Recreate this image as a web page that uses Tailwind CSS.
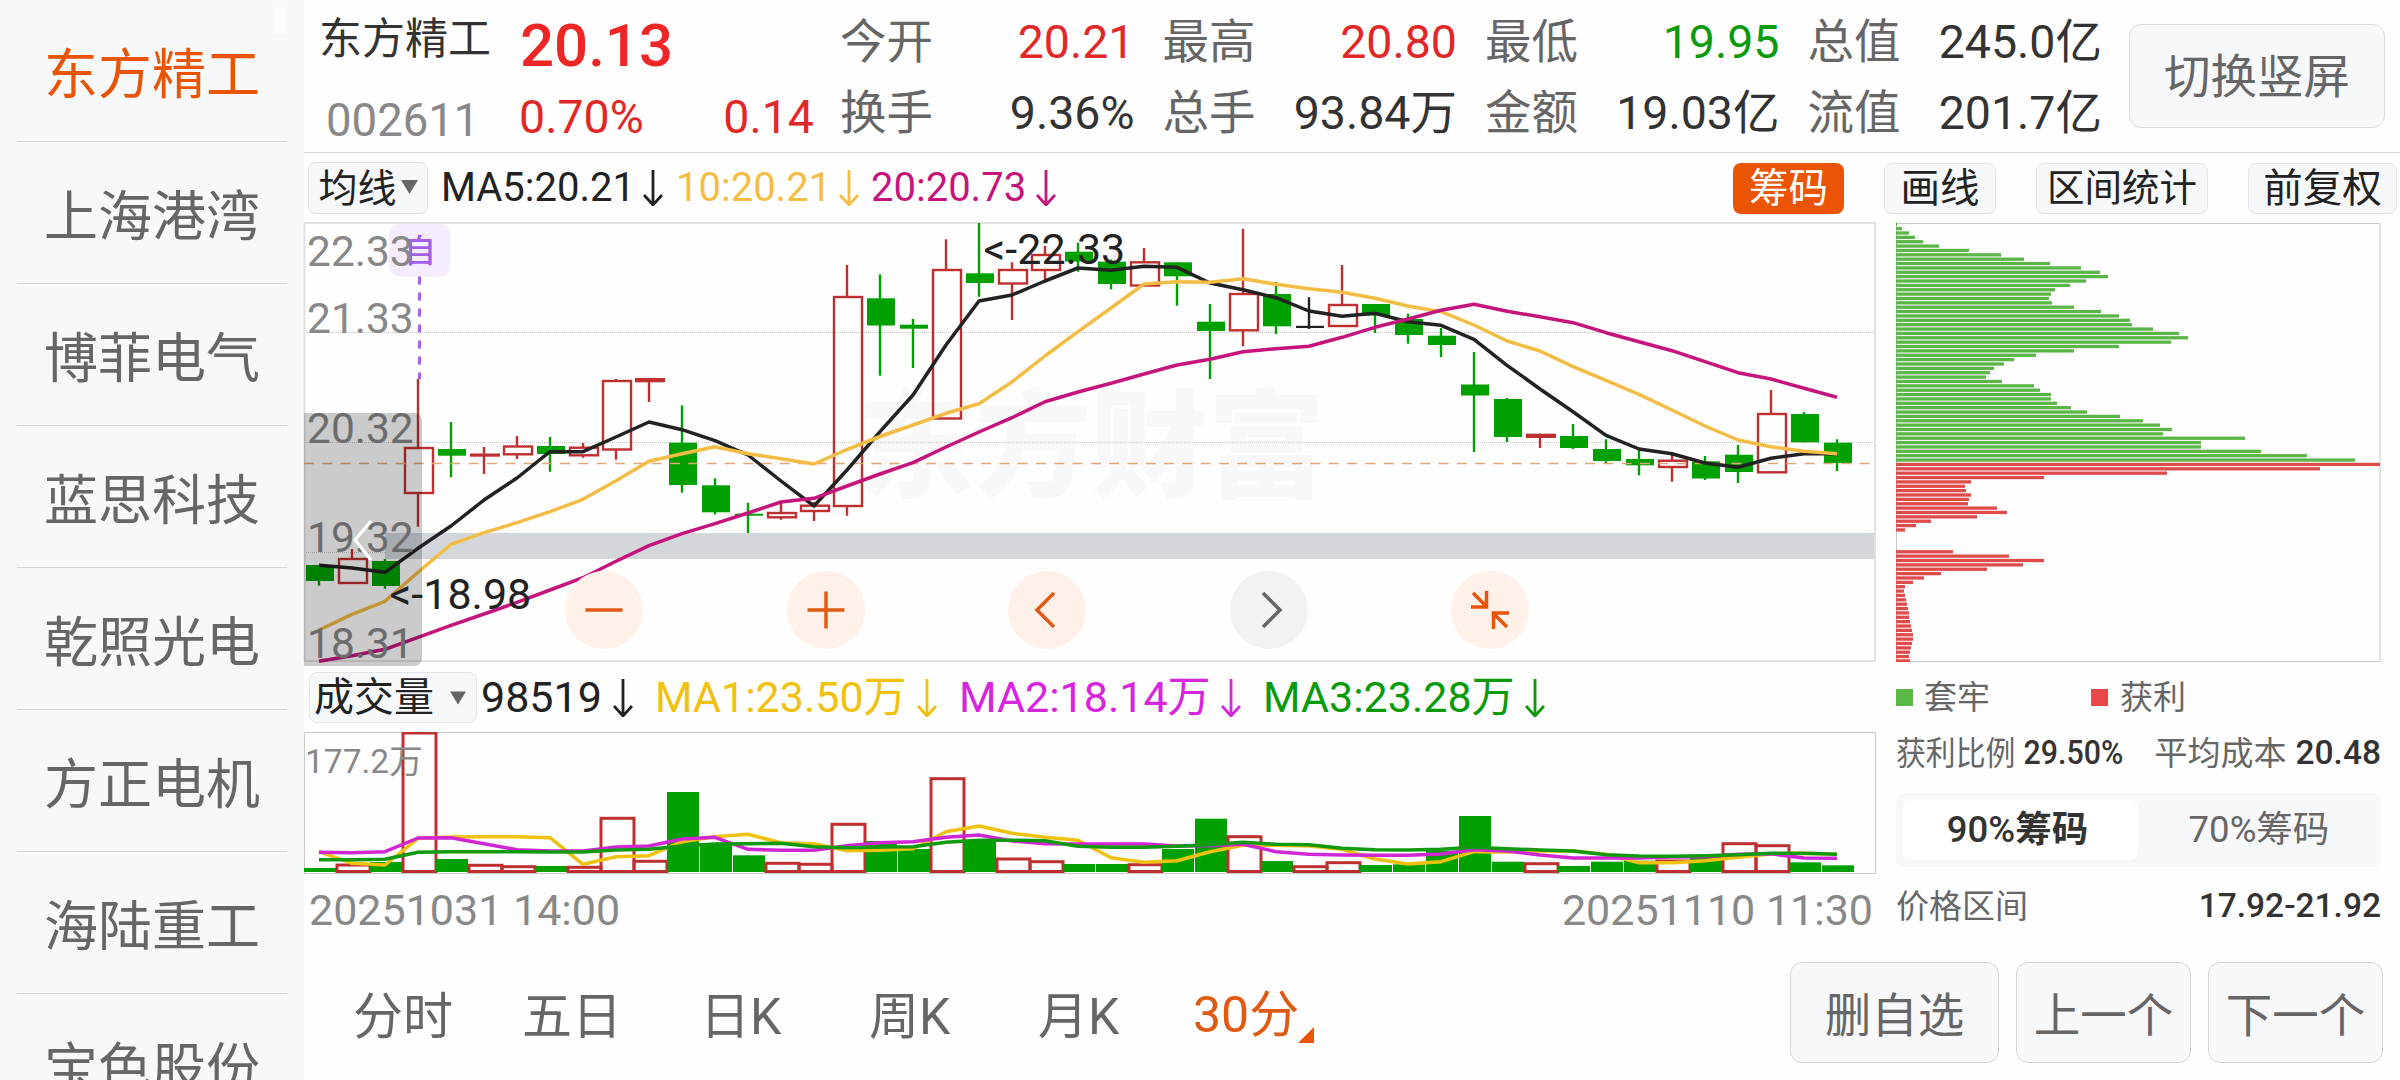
<!DOCTYPE html>
<html lang="zh-CN">
  <head>
    <meta charset="UTF-8" />
    <meta name="viewport" content="width=device-width, initial-scale=1.0" />
    <title>东方精工 002611</title>
    <script src="https://cdn.jsdelivr.net/npm/@tailwindcss/browser@4"></script>
  </head>
  <body
    class="w-[2400px] h-[1080px] overflow-hidden flex bg-[#fefefe] text-[#333] leading-none whitespace-nowrap font-['Roboto','Noto_Sans_CJK_SC',sans-serif]"
  >
    <!-- Watch list -->
    <aside class="relative w-[304px] h-full shrink-0 overflow-hidden bg-[#f7f8fa] px-[17px] text-[54px] text-[#666]">
      <div class="h-[142px] pt-2.5 flex items-center justify-center border-b border-[#d3d5d8] text-[#e95504]">东方精工</div>
      <div class="h-[142px] pt-2.5 flex items-center justify-center border-b border-[#d3d5d8]">上海港湾</div>
      <div class="h-[142px] pt-2.5 flex items-center justify-center border-b border-[#d3d5d8]">博菲电气</div>
      <div class="h-[142px] pt-2.5 flex items-center justify-center border-b border-[#d3d5d8]">蓝思科技</div>
      <div class="h-[142px] pt-2.5 flex items-center justify-center border-b border-[#d3d5d8]">乾照光电</div>
      <div class="h-[142px] pt-2.5 flex items-center justify-center border-b border-[#d3d5d8]">方正电机</div>
      <div class="h-[142px] pt-2.5 flex items-center justify-center border-b border-[#d3d5d8]">海陆重工</div>
      <div class="h-[142px] pt-2.5 flex items-center justify-center">宝色股份</div>
      <div class="absolute right-[17px] top-[5px] w-[14px] h-[29px] bg-[#fbfbfc]"></div>
    </aside>

    <main class="flex-1 flex flex-col">
      <!-- Quote header -->
      <header class="h-[153px] shrink-0 flex border-b border-[#d6d6d6]">
        <div class="w-[201px] pl-[15px] flex flex-col">
          <div class="h-[78px] flex items-center text-[43px] text-[#333]">东方精工</div>
          <div class="h-[74px] pt-[12px] pl-[7px] flex items-center text-[45.5px] text-[#888]">002611</div>
        </div>
        <div class="w-[309px] pl-[14px] flex flex-col text-[#ee2626]">
          <div class="h-[82px] pt-[10px] pl-px flex items-center text-[60px] font-medium">20.13</div>
          <div class="h-[70px] flex items-center justify-between text-[46.5px] text-[#e02828]">
            <span>0.70%</span><span>0.14</span>
          </div>
        </div>
        <div class="ml-[26px] pt-[7px] grid grid-cols-4 grid-rows-[71px_71px] gap-x-[28px] w-[1262px] text-[46.5px]">
          <div class="flex items-center justify-between"><span class="text-[#666]">今开</span><span class="text-[#e02828]">20.21</span></div>
          <div class="flex items-center justify-between"><span class="text-[#666]">最高</span><span class="text-[#e02828]">20.80</span></div>
          <div class="flex items-center justify-between"><span class="text-[#666]">最低</span><span class="text-[#0a9a0a]">19.95</span></div>
          <div class="flex items-center justify-between"><span class="text-[#666]">总值</span><span>245.0亿</span></div>
          <div class="flex items-center justify-between"><span class="text-[#666]">换手</span><span>9.36%</span></div>
          <div class="flex items-center justify-between"><span class="text-[#666]">总手</span><span>93.84万</span></div>
          <div class="flex items-center justify-between"><span class="text-[#666]">金额</span><span>19.03亿</span></div>
          <div class="flex items-center justify-between"><span class="text-[#666]">流值</span><span>201.7亿</span></div>
        </div>
        <button class="ml-[27px] mt-6 pt-[3px] w-[256px] h-[104px] rounded-xl border border-[#d8dade] bg-[#f7f8fa] text-[46.5px] text-[#666]">切换竖屏</button>
      </header>

      <!-- Indicator bar -->
      <div class="h-[69px] shrink-0 flex items-center pl-1 pr-[3px] text-[40px] text-[#222]">
        <button class="w-[120px] h-[52px] pt-[3px] flex items-center justify-center gap-1 rounded-lg border border-[#e1e4e8] bg-[#f7f8fa] text-[39px]">
          均线
          <svg class="w-[17px] h-[14px] mb-1" viewBox="0 0 17 14"><path d="M0 0h17l-8.500 14z" fill="#666" /></svg>
        </button>
        <div class="ml-[13px] pt-px w-[222px] flex items-center justify-between text-[#222]">
          MA5:20.21
          <svg class="shrink-0 w-5 h-9" viewBox="0 0 20 36" fill="none" stroke="currentColor" stroke-width="2.8"><path d="M10 0v34M1 25l9 10l9-10" /></svg>
        </div>
        <div class="ml-[13px] pt-px w-[183px] flex items-center justify-between text-[#f5bd45]">
          10:20.21
          <svg class="shrink-0 w-5 h-9" viewBox="0 0 20 36" fill="none" stroke="currentColor" stroke-width="2.8"><path d="M10 0v34M1 25l9 10l9-10" /></svg>
        </div>
        <div class="ml-3 pt-px w-[185px] flex items-center justify-between text-[#c5157c]">
          20:20.73
          <svg class="shrink-0 w-5 h-9" viewBox="0 0 20 36" fill="none" stroke="currentColor" stroke-width="2.8"><path d="M10 0v34M1 25l9 10l9-10" /></svg>
        </div>
        <div class="ml-auto pt-px flex gap-10 text-[39.5px]">
          <button class="w-[111px] h-[51px] pt-[2px] rounded-lg bg-[#e95504] text-white">筹码</button>
          <button class="w-[112px] h-[51px] pt-[2px] rounded-lg border border-[#e1e4e8] bg-[#f7f8fa]">画线</button>
          <button class="w-[172px] h-[51px] pt-[2px] rounded-lg border border-[#e1e4e8] bg-[#f7f8fa] text-[37.5px]">区间统计</button>
          <button class="w-[149px] h-[51px] pt-[2px] rounded-lg border border-[#e1e4e8] bg-[#f7f8fa]">前复权</button>
        </div>
      </div>

      <div class="flex h-[717px] shrink-0">
        <section class="w-[1572px] flex flex-col">
          <!-- Candles -->
          <div class="relative h-[440px]">
            <svg id="kline" class="block w-[1572px] h-[440px] overflow-visible" viewBox="304 222 1572 440">
              <text x="857" y="488" font-size="117" font-weight="900" fill="#f8f8f8">东方财富</text>
              <path d="M304 332.500H1875M304 442.500H1875M304 552.500H1875" stroke="#c8c8c8" stroke-dasharray="1 1" />
              <rect x="385" y="533" width="1490" height="26" fill="#d3d7dc" />
              <path d="M304 223H1875V661H304.500V223" fill="none" stroke="#e2e2e2" stroke-width="2" />
              <rect x="389" y="224" width="61.500" height="52.500" rx="11" fill="#f5edff" />
              <text x="404" y="262" font-size="32" font-weight="500" fill="#a35fe6">自</text>
              <path d="M419.500 276.500V379" stroke="#a35fe6" stroke-width="3" stroke-dasharray="8 8" />
              <g id="candles"></g>
              <path d="M304 463.500H1876" stroke="#dfa878" stroke-width="1.500" stroke-dasharray="10 8.3" />
              <g id="averages" fill="none" stroke-width="3.500" stroke-linejoin="round"></g>
              <g font-size="42.500" fill="#888">
                <text x="307" y="266">22.33</text>
                <text x="307" y="332.500">21.33</text>
                <text x="307" y="442.500">20.32</text>
                <text x="307" y="552">19.32</text>
                <text x="307" y="657.500">18.31</text>
              </g>
              <path d="M304 413h110a8 8 0 0 1 8 8v237a8 8 0 0 1-8 8H304z" fill="#000" fill-opacity=".2" />
              <path d="M371 521L355 540L371 560" fill="none" stroke="#fff" stroke-width="3" />
              <g font-size="43" fill="#222">
                <text x="983.500" y="264">&lt;-22.33</text>
                <text x="389.500" y="608.500">&lt;-18.98</text>
              </g>
            </svg>
            <div class="absolute left-[261px] top-[349px] flex gap-[143.5px]">
              <button class="size-[78px] rounded-full bg-[#fff1ea] text-[#e05a14]">
                <svg viewBox="-39 -39 78 78" fill="none" stroke="currentColor" stroke-width="3.500"><path d="M-18.500 0h37" /></svg>
              </button>
              <button class="size-[78px] rounded-full bg-[#fff1ea] text-[#e05a14]">
                <svg viewBox="-39 -39 78 78" fill="none" stroke="currentColor" stroke-width="3.500"><path d="M-18.500 0h37M0-18.500v37" /></svg>
              </button>
              <button class="size-[78px] rounded-full bg-[#fff1ea] text-[#e05a14]">
                <svg viewBox="-39 -39 78 78" fill="none" stroke="currentColor" stroke-width="3.500"><path d="M7-17L-10 0L7 17" /></svg>
              </button>
              <button class="size-[78px] rounded-full bg-[#f2f2f2] text-[#666]">
                <svg viewBox="-39 -39 78 78" fill="none" stroke="currentColor" stroke-width="3.500"><path d="M-6-17L11 0L-6 17" /></svg>
              </button>
              <button class="size-[78px] rounded-full bg-[#fff1ea] text-[#e95504]">
                <svg viewBox="-39 -39 78 78" fill="none" stroke="currentColor" stroke-width="3.500"><path d="M-17-17L-3.500-3.500M-3.500-19V-3H-19M17 17L3.500 3.500M3.500 19V3H19" /></svg>
              </button>
            </div>
          </div>

          <!-- Volume bar -->
          <div class="h-[70px] flex items-center pl-[5px] text-[43px] text-[#222]">
            <button class="w-[168px] h-[51px] pt-[2px] flex items-center pl-1 rounded-lg border border-[#e1e4e8] bg-[#f7f8fa] text-[40px]">
              成交量
              <svg class="ml-4 w-4 h-[14px]" viewBox="0 0 17 14"><path d="M0 0h17l-8.500 14z" fill="#666" /></svg>
            </button>
            <div class="ml-1 pt-px w-[152px] flex items-center justify-between">
              98519
              <svg class="shrink-0 w-5 h-[38px]" viewBox="0 0 20 38" fill="none" stroke="currentColor" stroke-width="2.8"><path d="M10 0v36M1 27l9 10l9-10" /></svg>
            </div>
            <div class="ml-[22px] pt-px w-[282px] flex items-center justify-between text-[#f0c20f]">
              MA1:23.50万
              <svg class="shrink-0 w-5 h-[38px]" viewBox="0 0 20 38" fill="none" stroke="currentColor" stroke-width="2.8"><path d="M10 0v36M1 27l9 10l9-10" /></svg>
            </div>
            <div class="ml-[22px] pt-px w-[282px] flex items-center justify-between text-[#d625dc]">
              MA2:18.14万
              <svg class="shrink-0 w-5 h-[38px]" viewBox="0 0 20 38" fill="none" stroke="currentColor" stroke-width="2.8"><path d="M10 0v36M1 27l9 10l9-10" /></svg>
            </div>
            <div class="ml-[22px] pt-px w-[282px] flex items-center justify-between text-[#0a9a0a]">
              MA3:23.28万
              <svg class="shrink-0 w-5 h-[38px]" viewBox="0 0 20 38" fill="none" stroke="currentColor" stroke-width="2.8"><path d="M10 0v36M1 27l9 10l9-10" /></svg>
            </div>
          </div>

          <svg class="block w-[1572px] h-[142px]" viewBox="304 732 1572 142">
            <rect x="304.500" y="732.500" width="1571" height="141" fill="none" stroke="#c9c9c9" />
            <g id="volumes"></g>
            <g id="volumeAverages" fill="none" stroke-width="3.500" stroke-linejoin="round"></g>
            <text x="305" y="773" font-size="33.500" fill="#888">177.2万</text>
          </svg>

          <div class="h-[65px] pt-[8px] pl-[5px] pr-[3px] flex items-center justify-between text-[43px] text-[#888]">
            <span>20251031 14:00</span><span>20251110 11:30</span>
          </div>
        </section>

        <!-- Chip distribution -->
        <section class="ml-5 w-[485px] text-[33px] text-[#666]">
          <svg id="chips" class="block w-[485px] h-[440px]" viewBox="1896 222 485 440">
            <rect x="1896.500" y="223.500" width="483.500" height="438" fill="none" stroke="#c9c9c9" />
          </svg>
          <div class="h-[70px] flex items-center">
            <i class="size-[17px] bg-[#58b944]"></i><span class="ml-[11px] w-[167px]">套牢</span>
            <i class="size-[17px] bg-[#e84848]"></i><span class="ml-[12px]">获利</span>
          </div>
          <div class="h-[42px] flex items-center justify-between">
            <div class="w-[226px] flex items-center gap-[9px] scale-x-[.905] origin-left">
              <span>获利比例</span><span class="text-[33.5px] font-medium text-[#333]">29.50%</span>
            </div>
            <div class="flex items-center gap-[9px]"><span>平均成本</span><span class="text-[33.5px] font-medium text-[#333]">20.48</span></div>
          </div>
          <div class="mt-[19px] h-[74px] p-[7px] flex rounded-lg bg-[#f7f8fa] text-[36.5px]">
            <div class="w-[235px] pr-1.5 flex items-center justify-center rounded-lg bg-white font-medium text-[#333]">90%<b>筹码</b></div>
            <div class="flex-1 pl-1.5 flex items-center justify-center">70%筹码</div>
          </div>
          <div class="h-[78px] flex items-center justify-between">
            <span>价格区间</span><span class="text-[33.5px] font-medium text-[#333]">17.92-21.92</span>
          </div>
        </section>
      </div>

      <!-- Periods -->
      <footer class="flex-1 flex pt-[23px] pr-[17px] text-[50px] text-[#666]">
        <nav class="pl-[49px] pt-[7px] h-[102px] flex items-center">
          <span class="w-[169px]">分时</span>
          <span class="w-[178px]">五日</span>
          <span class="w-[169px]">日K</span>
          <span class="w-[169px]">周K</span>
          <span class="w-[155px]">月K</span>
          <span class="flex text-[#e05a14]">
            30分
            <svg class="mt-[37px] -ml-px w-4 h-4" viewBox="0 0 16 16"><path d="M16 0V16H0z" fill="#e95504" /></svg>
          </span>
        </nav>
        <div class="ml-auto flex gap-[17px] text-[46.5px]">
          <button class="w-[209px] h-[101px] pt-[7px] rounded-xl border border-[#d3d7dd] bg-[#f7f8fa]">删自选</button>
          <button class="w-[175px] h-[101px] pt-[7px] rounded-xl border border-[#d3d7dd] bg-[#f7f8fa]">上一个</button>
          <button class="w-[175px] h-[101px] pt-[7px] rounded-xl border border-[#d3d7dd] bg-[#f7f8fa]">下一个</button>
        </div>
      </footer>
    </main>

    <script>
      const NS = "http://www.w3.org/2000/svg";
      const RED = "#be3030";
      const GREEN = "#00a000";
      const STEP = 33;
      const FIRST = 319;

      function add(parent, tag, attrs) {
        const el = document.createElementNS(NS, tag);
        for (const key in attrs) el.setAttribute(key, attrs[key]);
        parent.appendChild(el);
      }

      // [kind, high, top, bottom, low], g = down, r = up, s = solid up, b = flat
      const candles = [
        ["g", 565, 565, 581, 585.7], ["r", 549, 559, 583, 583], ["g", 559, 561, 586, 588.7],
        ["r", 379, 448, 493, 526.7], ["g", 422, 449, 455.7, 477.3], ["s", 447, 453.5, 456.7, 474],
        ["r", 436, 446.5, 454.3, 459], ["g", 437, 446, 454, 471.7], ["r", 443, 447.7, 455.3, 457.7],
        ["r", 379, 381, 449.5, 459.7], ["s", 378, 378, 382.3, 402], ["g", 405.3, 442.7, 485, 492.7],
        ["g", 478.3, 485.3, 512.3, 514.5], ["g", 502.7, 513.7, 515.7, 533], ["r", 502.7, 513, 517.3, 519.7],
        ["r", 502, 505.7, 511, 521], ["r", 265, 297, 506, 515.7], ["g", 274.3, 298.3, 325.5, 375.7],
        ["g", 319, 324.7, 328.7, 368], ["r", 239.3, 270, 418.5, 418], ["g", 223, 273.3, 283, 296.7],
        ["r", 262.3, 270, 283.5, 320], ["r", 246, 255, 270, 280.7], ["g", 242.7, 251.7, 261.5, 271.7],
        ["g", 259.5, 261.7, 284, 289.3], ["r", 248, 262.3, 285.5, 285], ["g", 262.3, 262.3, 276.3, 305.7],
        ["g", 304, 321.7, 331, 379], ["r", 228.7, 294, 330.3, 346.3], ["g", 282, 294, 326.3, 334],
        ["b", 297.3, 325.8, 328, 329], ["r", 265, 305, 326, 326], ["g", 304, 304, 315.5, 333],
        ["g", 313.7, 319, 335, 343.7], ["g", 328, 335.7, 345, 357], ["g", 352, 384.5, 395.5, 452],
        ["g", 398, 399, 437, 442], ["s", 433.7, 433.7, 438, 448], ["g", 424, 436, 448, 449],
        ["g", 439.3, 449, 461, 463], ["g", 449, 459, 465.3, 475.3], ["r", 452.7, 460.7, 467, 481.7],
        ["g", 456, 461.3, 478.5, 480], ["g", 445, 454.7, 472, 483], ["r", 390, 414, 472.3, 472],
        ["g", 412, 414, 442.3, 442.3], ["g", 439.3, 442.7, 463, 471],
      ];
      const candleLayer = document.getElementById("candles");
      candles.forEach(([kind, high, top, bottom, low], i) => {
        const x = FIRST + i * STEP;
        const color = kind === "g" ? GREEN : kind === "b" ? "#222" : RED;
        if (kind === "r") {
          add(candleLayer, "path", {
            d: `M${x} ${high}V${top}M${x} ${bottom}V${Math.max(low, bottom)}`,
            stroke: color, "stroke-width": 2.4,
          });
          add(candleLayer, "rect", {
            x: x - 13, y: top, width: 28, height: bottom - top,
            fill: "none", stroke: color, "stroke-width": 2.4,
          });
        } else {
          add(candleLayer, "path", { d: `M${x} ${high}V${low}`, stroke: color, "stroke-width": 2.4 });
          const pad = kind === "s" ? 1 : 0;
          add(candleLayer, "rect", {
            x: x - 13 - pad, y: top, width: 28 + pad * 2, height: bottom - top, fill: color,
          });
        }
      });

      function line(layer, color, ys) {
        const points = ys.map((y, i) => `${FIRST + i * STEP},${y}`).join(" ");
        add(layer, "polyline", { points, stroke: color });
      }

      const averages = document.getElementById("averages");
      line(averages, "#222", [
        565.3, 568, 572.3, 548.3, 526, 500, 478, 451.7, 451.7, 437, 422, 429.7, 440.7, 455, 481, 506,
        470, 431.7, 395, 345, 301, 295, 281, 268, 270.3, 266.3, 267.3, 283, 289.7, 297.7, 311, 316.3,
        313.3, 321.7, 325.3, 339.3, 365.3, 389, 411.7, 435.3, 449, 453.7, 463, 467.3, 458.3, 453.7, 453.7,
      ]);
      line(averages, "#f3bc44", [
        630, 614.3, 601.3, 572.3, 544.3, 532.7, 522.7, 511.7, 499.3, 480.7, 461.3, 453.7, 446.7, 453.7,
        458.7, 464, 449.5, 436.5, 425, 413.3, 403.7, 382, 356, 331.7, 308, 284, 281.7, 282.3, 278.7,
        284.3, 288.7, 292.3, 298.3, 306, 311.7, 325, 341, 351, 366.7, 380.3, 394.3, 410, 426, 440,
        446.7, 451.3, 453.7,
      ]);
      line(averages, "#c5157c", [
        661.3, 655.7, 649.3, 637.3, 625.3, 614, 602.3, 590, 577.7, 561.3, 545.7, 533.7, 523.7, 513, 502,
        498.3, 486, 474, 462.7, 447, 432, 417.7, 401.7, 392, 383.3, 374, 365, 359.3, 351.7, 348.7,
        346.3, 337.3, 327.3, 319, 310.3, 304.3, 311.3, 316.7, 322.7, 332.7, 341.7, 350.7, 361.7, 372.7,
        379, 388.3, 397.3,
      ]);

      const volumes = [
        ["g", 868], ["r", 865], ["g", 862], ["r", 733], ["g", 859], ["r", 865.3], ["r", 866.7], ["g", 866],
        ["r", 867.3], ["r", 818.3], ["r", 861.3], ["g", 792], ["g", 844.3], ["g", 855.3], ["r", 863.3],
        ["r", 864.3], ["r", 824.3], ["g", 841], ["g", 849], ["r", 778.7], ["g", 840.3], ["r", 859],
        ["r", 861.7], ["g", 864], ["g", 864], ["r", 864.7], ["g", 849], ["g", 818.7], ["r", 836.7],
        ["g", 861], ["r", 866.7], ["r", 862.7], ["g", 865], ["g", 864.3], ["g", 850.7], ["g", 816],
        ["g", 861.7], ["r", 863.7], ["g", 866], ["g", 861.7], ["g", 860.7], ["r", 861], ["g", 856.7],
        ["r", 843.7], ["r", 845.7], ["g", 862.3], ["g", 865.3],
      ];
      const volumeLayer = document.getElementById("volumes");
      volumes.forEach(([kind, top], i) => {
        const x = FIRST + i * STEP - 15;
        add(volumeLayer, "rect", kind === "g"
          ? { x, y: top, width: 32, height: 872 - top, fill: GREEN }
          : { x, y: top, width: 33, height: 871.5 - top, fill: "none", stroke: RED, "stroke-width": 3 });
      });

      const volumeAverages = document.getElementById("volumeAverages");
      line(volumeAverages, "#f0c20f", [
        851.7, 863.3, 865, 838.3, 837, 836.7, 836.7, 837.7, 864.3, 856.7, 855.7, 841.7, 836.7, 834.3,
        842.7, 843.7, 850.7, 850.3, 848.7, 831.7, 826, 833.3, 837.3, 840.3, 857.7, 862.3, 860.7, 851.7,
        845.3, 845.3, 846, 849.3, 859, 864, 861.7, 851.7, 852, 850.7, 851, 854.3, 862.7, 862.7, 860.7,
        857.3, 854, 853.3, 854.3,
      ]);
      line(volumeAverages, "#d026d4", [
        852.3, 852.7, 851.7, 838, 837.7, 843.7, 849.7, 851, 851, 847, 846, 839, 837.3, 849.3, 850.3,
        850.3, 845.7, 842.7, 841.7, 837.3, 835, 841, 843.7, 844, 844, 844, 846, 845.7, 844.3, 851.7,
        854.3, 855, 855.3, 855.3, 854, 849.7, 851, 855, 858, 858, 858, 857, 856.7, 854.3, 853.7, 858, 858.3,
      ]);
      line(volumeAverages, "#109a10", [
        859.7, 859.7, 859.3, 852.3, 851.7, 851.7, 851.7, 852, 852, 850, 849.3, 846, 844, 843.7, 843.3,
        846.7, 847.7, 847, 846.7, 842.3, 840.3, 840.3, 840.7, 846.3, 847.3, 847.3, 846.3, 844.7, 842.3,
        844.3, 844.7, 848.3, 849.7, 850, 849.3, 847.3, 848.7, 850, 851, 854.7, 856, 856.3, 855.7, 854.7,
        853.3, 853.3, 854.3,
      ]);

      // Chip widths from the highest price down, the first 55 are trapped
      const chips = [
        1, 6, 13, 19, 27, 43, 73, 105, 128, 154, 185, 204, 212, 190, 174, 159, 155, 153, 156, 178, 205,
        223, 234, 236, 257, 283, 292, 275, 223, 178, 140, 118, 108, 98, 94, 90, 106, 138, 144, 155, 155,
        161, 175, 191, 224, 247, 264, 276, 267, 349, 305, 305, 365, 411, 459, 484, 424, 271, 148, 75, 69,
        70, 75, 73, 72, 101, 111, 81, 35, 20, 9, 0, 0, 0, 0, 57, 113, 148, 127, 91, 45, 28, 17, 9, 8, 9,
        10, 11, 12, 13, 13, 14, 15, 16, 17, 17, 16, 15, 14, 13, 14,
      ];
      const chipLayer = document.getElementById("chips");
      chips.forEach((width, i) => {
        add(chipLayer, "rect", {
          x: 1896, y: (222.6 + i * 4.367).toFixed(2), width, height: 3.3,
          fill: i < 55 ? "#5cb548" : "#de4b4b",
        });
      });
    </script>
  </body>
</html>
